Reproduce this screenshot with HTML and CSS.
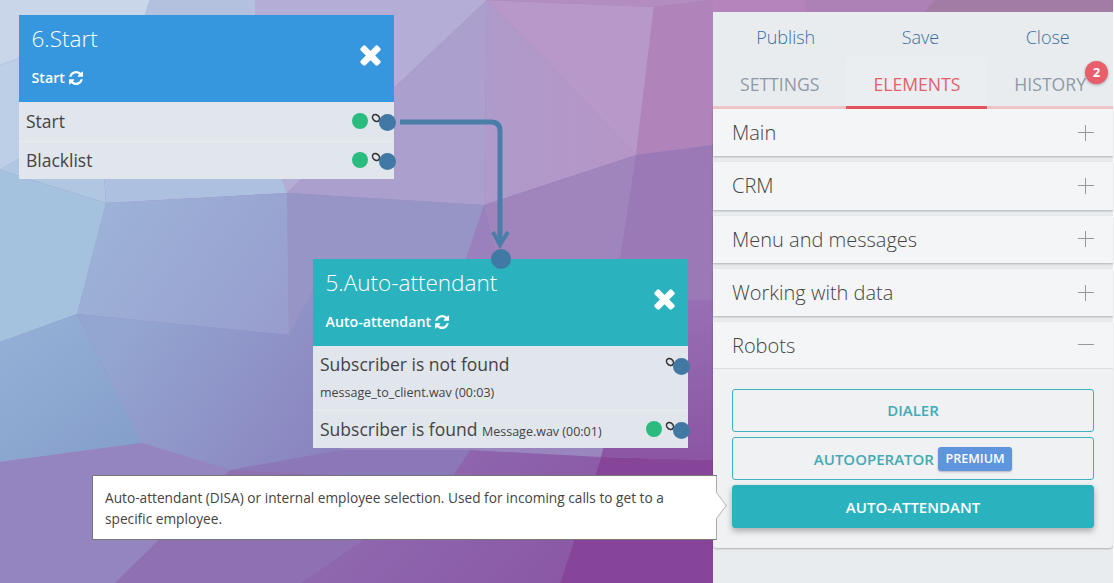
FILE: index.html

```html
<!DOCTYPE html>
<html lang="en">
<head>
  <meta charset="UTF-8">
  <meta name="viewport" content="width=device-width, initial-scale=1.0">
  <title>Scenario editor</title>
  <link rel="stylesheet" href="styles.css">
</head>
<body>

  <div class="app">
    <!-- low poly backdrop -->
    <svg class="backdrop" viewBox="0 0 1113 583" preserveAspectRatio="none">
      <defs>
        <linearGradient id="g-left" gradientUnits="userSpaceOnUse" x1="0" y1="330" x2="100" y2="460">
          <stop offset="0" stop-color="#95b0d6"/><stop offset="1" stop-color="#86a0cc"/>
        </linearGradient>
        <linearGradient id="g-mid" gradientUnits="userSpaceOnUse" x1="130" y1="320" x2="340" y2="470">
          <stop offset="0" stop-color="#93a6d1"/><stop offset="1" stop-color="#8a80bd"/>
        </linearGradient>
        <linearGradient id="g-band" gradientUnits="userSpaceOnUse" x1="110" y1="210" x2="290" y2="330">
          <stop offset="0" stop-color="#9cb2d7"/><stop offset="1" stop-color="#989dce"/>
        </linearGradient>
        <linearGradient id="g-side" gradientUnits="userSpaceOnUse" x1="0" y1="300" x2="0" y2="460">
          <stop offset="0" stop-color="#976fb4"/><stop offset="1" stop-color="#8c55a4"/>
        </linearGradient>
        <linearGradient id="g-low" gradientUnits="userSpaceOnUse" x1="400" y1="450" x2="560" y2="583">
          <stop offset="0" stop-color="#8e69b0"/><stop offset="1" stop-color="#8b58a6"/>
        </linearGradient>
        <linearGradient id="g-top" gradientUnits="userSpaceOnUse" x1="484" y1="120" x2="620" y2="120">
          <stop offset="0" stop-color="#ae9bcb"/><stop offset="1" stop-color="#b596c7"/>
        </linearGradient>
      </defs>
      <rect width="1113" height="583" fill="#9a86bf"/>
      <polygon fill="#c9d6e9" points="0,0 150,0 145,15 0,65"/>
      <polygon fill="#b3c0de" points="150,0 255,0 255,100 145,15"/>
      <polygon fill="#bccfe6" points="0,65 145,15 100,110 0,170"/>
      <polygon fill="#afc7e1" points="0,170 100,110 106,203"/>
      <polygon fill="#aec0df" points="100,110 145,15 255,100 287,193 106,203"/>
      <polygon fill="#b4aed7" points="255,0 487,0 395,87 287,193 255,100"/>
      <polygon fill="#ab9fce" points="487,0 484,205 287,193 395,87"/>
      <polygon fill="url(#g-top)" points="487,0 636,155 484,205"/>
      <polygon fill="#b898c9" points="487,0 654,7 636,155"/>
      <polygon fill="#b38cc0" points="487,0 713,0 654,7"/>
      <polygon fill="#b083bb" points="654,7 713,0 713,145 636,155"/>
      <polygon fill="#9f85bc" points="484,205 636,155 620,259 505,290"/>
      <polygon fill="#9a79b6" points="636,155 713,145 713,300 640,300 620,259"/>
      <polygon fill="#9795c6" points="287,193 484,205 465,262 313,290 289,335"/>
      <polygon fill="#9a80bc" points="484,205 505,290 465,262"/>
      <polygon fill="url(#g-band)" points="106,203 287,193 289,335 77,314"/>
      <polygon fill="#a4c2dd" points="0,170 106,203 77,314 0,342"/>
      <polygon fill="url(#g-left)" points="0,342 77,314 142,443 0,462"/>
      <polygon fill="url(#g-mid)" points="77,314 289,335 313,290 340,450 230,470 142,443"/>
      <polygon fill="url(#g-side)" points="640,300 713,300 713,460 601,457"/>
      <polygon fill="#9484bf" points="0,462 142,443 230,470 115,583 0,583"/>
      <polygon fill="#8a78b8" points="340,450 470,450 450,480 230,470"/>
      <polygon fill="url(#g-low)" points="470,450 601,457 560,583 300,583 450,480"/>
      <polygon fill="#8e70b3" points="230,470 450,480 300,583 115,583"/>
      <polygon fill="#87459a" points="601,457 713,460 713,583 560,583"/>
      <polygon fill="#b584bd" points="713,0 805,0 805,12 713,12"/>
      <polygon fill="#ad80b6" points="805,0 935,0 925,12 805,12"/>
      <polygon fill="#a37ca4" points="935,0 1113,0 1113,12 925,12"/>
    </svg>

    <div class="canvas">
      <svg class="links" width="713" height="583">
        <path d="M400 122 H491 Q500 122 500 131 V244" />
        <path class="head" d="M493 232 L500 245 L508 232" />
      </svg>

      <div class="node node-start">
        <div class="node-head">
          <div>
            <h3>6.Start</h3>
            <div class="node-type">Start
              <svg class="refresh" viewBox="0 0 1536 1536"><path d="M1511 928q0 5-1 7-64 268-268 434.5t-478 166.5q-146 0-282.5-55t-243.5-157l-129 129q-19 19-45 19t-45-19-19-45v-448q0-26 19-45t45-19h448q26 0 45 19t19 45-19 45l-137 137q71 66 161 102t187 36q134 0 250-65t186-179q11-17 53-117 8-23 30-23h192q13 0 22.5 9.5t9.5 22.5zm25-800v448q0 26-19 45t-45 19h-448q-26 0-45-19t-19-45 19-45l138-138q-148-137-349-137-134 0-250 65t-186 179q-11 17-53 117-8 23-30 23h-199q-13 0-22.5-9.5t-9.5-22.5v-7q65-268 270-434.5t480-166.5q146 0 284 55.5t245 156.5l130-129q19-19 45-19t45 19 19 45z"/></svg>
            </div>
          </div>
          <svg class="close-x" viewBox="290 230 1212 1336"><path d="M1490 1322q0 40-28 68l-136 136q-28 28-68 28t-68-28l-294-294-294 294q-28 28-68 28t-68-28l-136-136q-28-28-28-68t28-68l294-294-294-294q-28-28-28-68t28-68l136-136q28-28 68-28t68 28l294 294 294-294q28-28 68-28t68 28l136 136q28 28 28 68t-28 68l-294 294 294 294q28 28 28 68z"/></svg>
        </div>
        <div class="node-row">
          <span>Start</span>
          <i class="dot"></i>
          <svg class="chain" viewBox="0 0 12 12"><ellipse cx="6" cy="6" rx="3.8" ry="3" transform="rotate(40 6 6)"/></svg>
          <i class="port"></i>
        </div>
        <div class="node-row">
          <span>Blacklist</span>
          <i class="dot"></i>
          <svg class="chain" viewBox="0 0 12 12"><ellipse cx="6" cy="6" rx="3.8" ry="3" transform="rotate(40 6 6)"/></svg>
          <i class="port"></i>
        </div>
      </div>

      <div class="node node-attendant">
        <i class="port-in"></i>
        <div class="node-head">
          <div>
            <h3>5.Auto-attendant</h3>
            <div class="node-type">Auto-attendant
              <svg class="refresh" viewBox="0 0 1536 1536"><path d="M1511 928q0 5-1 7-64 268-268 434.5t-478 166.5q-146 0-282.5-55t-243.5-157l-129 129q-19 19-45 19t-45-19-19-45v-448q0-26 19-45t45-19h448q26 0 45 19t19 45-19 45l-137 137q71 66 161 102t187 36q134 0 250-65t186-179q11-17 53-117 8-23 30-23h192q13 0 22.5 9.5t9.5 22.5zm25-800v448q0 26-19 45t-45 19h-448q-26 0-45-19t-19-45 19-45l138-138q-148-137-349-137-134 0-250 65t-186 179q-11 17-53 117-8 23-30 23h-199q-13 0-22.5-9.5t-9.5-22.5v-7q65-268 270-434.5t480-166.5q146 0 284 55.5t245 156.5l130-129q19-19 45-19t45 19 19 45z"/></svg>
            </div>
          </div>
          <svg class="close-x" viewBox="290 230 1212 1336"><path d="M1490 1322q0 40-28 68l-136 136q-28 28-68 28t-68-28l-294-294-294 294q-28 28-68 28t-68-28l-136-136q-28-28-28-68t28-68l294-294-294-294q-28-28-28-68t28-68l136-136q28-28 68-28t68 28l294 294 294-294q28-28 68-28t68 28l136 136q28 28 28 68t-28 68l-294 294 294 294q28 28 28 68z"/></svg>
        </div>
        <div class="node-row tall">
          <div>
            <span>Subscriber is not found</span>
            <small>message_to_client.wav (00:03)</small>
          </div>
          <svg class="chain" viewBox="0 0 12 12"><ellipse cx="6" cy="6" rx="3.8" ry="3" transform="rotate(40 6 6)"/></svg>
          <i class="port"></i>
        </div>
        <div class="node-row">
          <span>Subscriber is found <small class="inline">Message.wav (00:01)</small></span>
          <i class="dot"></i>
          <svg class="chain" viewBox="0 0 12 12"><ellipse cx="6" cy="6" rx="3.8" ry="3" transform="rotate(40 6 6)"/></svg>
          <i class="port"></i>
        </div>
      </div>

      <div class="hint">Auto-attendant (DISA) or internal employee selection. Used for incoming calls to get to a specific employee.</div>
    </div>

    <div class="sidebar">
      <div class="actions">
        <a>Publish</a>
        <a>Save</a>
        <a>Close</a>
      </div>
      <div class="tabs">
        <div class="tab">SETTINGS</div>
        <div class="tab active">ELEMENTS</div>
        <div class="tab">HISTORY<b class="count">2</b></div>
      </div>

      <div class="group"><span>Main</span><i class="plus"></i></div>
      <div class="group"><span>CRM</span><i class="plus"></i></div>
      <div class="group"><span>Menu and messages</span><i class="plus"></i></div>
      <div class="group"><span>Working with data</span><i class="plus"></i></div>
      <div class="group-open">
        <div class="group"><span>Robots</span><i class="minus"></i></div>
        <div class="group-body">
          <button class="btn">DIALER</button>
          <button class="btn">AUTOOPERATOR <em class="premium">PREMIUM</em></button>
          <button class="btn filled">AUTO-ATTENDANT</button>
        </div>
      </div>
    </div>
  </div>

</body>
</html>
```

FILE: styles.css

```css
* { box-sizing: border-box; margin: 0; padding: 0; }
html, body { height: 100%; overflow: hidden; }
body {
  font-family: 'Open Sans', sans-serif;
  background: #fff;
  color: #444;
}
.app {
  position: relative;
  display: flex;
  width: 1113px;
  height: 100%;
}
.backdrop {
  position: absolute;
  top: 0;
  left: 0;
  width: 100%;
  height: 100%;
}
.canvas {
  position: relative;
  width: 713px;
  flex: none;
}
.links {
  position: absolute;
  top: 0;
  left: 0;
}
.links path {
  fill: none;
  stroke: #4a7ea8;
  stroke-width: 5;
}
.links .head { stroke-width: 4; }

/* nodes */
.node {
  position: absolute;
  width: 375px;
}
.node-start { left: 19px; top: 15px; }
.node-attendant { left: 313px; top: 259px; }
.node-head {
  height: 87px;
  padding: 8px 13px 14px 12.5px;
  display: flex;
  justify-content: space-between;
  align-items: center;
  color: #fff;
  background: #3797de;
}
.node-attendant .node-head { background: #2ab3bf; }
.node-head h3 {
  font-size: 22.5px;
  font-weight: 300;
  line-height: 31px;
}
.node-type {
  display: flex;
  align-items: center;
  gap: 4px;
  margin-top: 14px;
  font-size: 14.2px;
  font-weight: 600;
  line-height: 20px;
}
.refresh { width: 14px; height: 14px; fill: #fff; }
.close-x { width: 21px; height: 23px; margin-bottom: 2px; fill: #fff; }
.node-row {
  position: relative;
  display: flex;
  justify-content: space-between;
  align-items: center;
  height: 39px;
  padding: 0 26px 1px 7px;
  font-size: 17.5px;
  color: #444;
  background: #e1e5ec;
  box-shadow: inset 0 1px 0 #e9edf2;
}
.node-head + .node-row { box-shadow: none; }
.node-row:last-child { height: 38px; }
.node-row.tall { height: 64px; align-items: flex-start; padding-top: 6px; }
.node-row small {
  display: block;
  margin-top: 8px;
  font-size: 12.5px;
  line-height: 18px;
}
.node-row small.inline { display: inline; margin: 0; }
.dot {
  width: 16px;
  height: 16px;
  border-radius: 50%;
  background: #2abb7f;
}
.port, .port-in {
  position: absolute;
  border-radius: 50%;
  background: #4179a5;
}
.port {
  right: -2px;
  top: 12px;
  width: 17px;
  height: 17px;
}
.port-in {
  left: 178px;
  top: -10px;
  width: 20px;
  height: 20px;
  z-index: 1;
}
.chain {
  position: absolute;
  right: 12px;
  top: 9.5px;
  width: 12px;
  height: 12px;
  fill: none;
  stroke: #333;
  stroke-width: 1.6;
}

/* tooltip */
.hint {
  position: absolute;
  left: 92px;
  top: 475px;
  width: 625px;
  height: 65px;
  padding: 11px 12px;
  font-size: 13.7px;
  line-height: 21px;
  color: #444;
  background: #fff;
  border: 1px solid #777;
  border-right-color: #aaa;
  z-index: 5;
}
.hint::after {
  content: "";
  position: absolute;
  right: -11px;
  top: 21px;
  width: 16px;
  height: 16px;
  background: #fff;
  border-top: 1px solid #bbb;
  border-right: 1px solid #bbb;
  transform: translateX(-2px) rotate(45deg) skew(8deg, 8deg);
}

/* sidebar */
.sidebar {
  position: relative;
  width: 400px;
  margin-top: 12px;
  background: #e9ecef;
}
.actions {
  display: flex;
  justify-content: space-around;
  height: 45px;
  padding-top: 12px;
  font-size: 18px;
  font-weight: 300;
  line-height: 26px;
  color: #3a6fa3;
}
.tabs {
  display: flex;
  height: 52px;
  border-bottom: 3px solid #edc4c8;
}
.tab {
  position: relative;
  flex: 1 1 auto;
  height: 52px;
  padding-top: 14px;
  font-size: 17.6px;
  font-weight: 400;
  line-height: 26px;
  text-align: center;
  color: #8f9aa6;
}
.tab.active {
  color: #e2606a;
  background: #ebeef1;
  border-bottom: 3px solid #e2555f;
}
.count {
  position: absolute;
  right: 5px;
  top: 4px;
  width: 23px;
  height: 23px;
  border-radius: 50%;
  font-size: 13px;
  line-height: 23px;
  color: #fff;
  background: #e85e6b;
  box-shadow: 0 1px 3px rgba(0,0,0,0.3);
}
.group {
  display: flex;
  justify-content: space-between;
  align-items: center;
  height: 47.3px;
  margin-bottom: 6px;
  padding: 0 19px;
  font-size: 20px;
  font-weight: 300;
  color: #444;
  background: #f4f5f6;
  box-shadow: 0 1px 2px rgba(0,0,0,0.25);
}
.plus, .minus {
  position: relative;
  width: 16px;
  height: 16px;
}
.plus::before, .minus::before {
  content: "";
  position: absolute;
  left: 0;
  right: 0;
  top: 7px;
  height: 1px;
  background: #999;
}
.plus::after {
  content: "";
  position: absolute;
  top: 0;
  bottom: 0;
  left: 7px;
  width: 1px;
  background: #999;
}
.group-open {
  background: #eff1f3;
  border-radius: 0 0 4px 4px;
  box-shadow: 0 1px 2px rgba(0,0,0,0.25);
}
.group-open .group {
  margin-bottom: 0;
  box-shadow: none;
  border-bottom: 1px solid #dcdfe2;
}
.group-body {
  display: flex;
  flex-direction: column;
  gap: 5.5px;
  padding: 19.5px 19px 20px;
}
.btn {
  display: flex;
  justify-content: center;
  align-items: center;
  gap: 4px;
  height: 42.7px;
  font-family: inherit;
  font-size: 15px;
  font-weight: 600;
  color: #45aab4;
  background: transparent;
  border: 1px solid #3fb0bd;
  border-radius: 3px;
}
.btn.filled {
  color: #fff;
  background: #2ab3bf;
  border-color: #2ab3bf;
  box-shadow: 0 3px 6px rgba(0,0,0,0.3);
}
.premium {
  padding: 0 7.5px;
  font-size: 12.6px;
  font-style: normal;
  line-height: 24px;
  color: #fff;
  background: #5f94de;
  border-radius: 3px;
  box-shadow: 0 1px 2px rgba(0,0,0,0.25);
}
```
